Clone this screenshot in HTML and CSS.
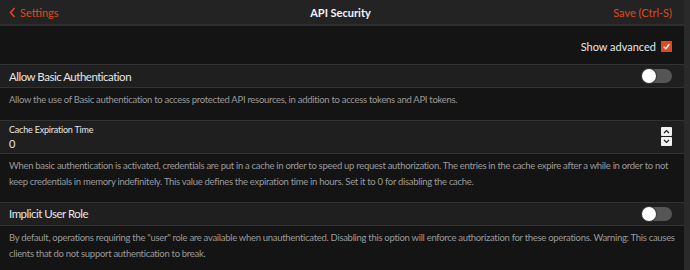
FILE: index.html
```html
<!DOCTYPE html>
<html lang="en">
<head>
  <meta charset="UTF-8" />
  <title>API Security</title>
  <link rel="stylesheet" href="styles.css">
</head>
<body>

<header class="topbar">
  <a class="topbar__back" href="#">
    <svg width="7" height="11" viewBox="0 0 7 11"><path d="M5.5 1 1.5 5.5 5.5 10" fill="none" stroke="currentColor" stroke-width="1.6"/></svg>
    Settings
  </a>
  <div class="topbar__title">API Security</div>
  <a class="topbar__save" href="#">Save (Ctrl-S)</a>
</header>

<main class="settings">
  <div class="settings__advanced">
    <label>Show advanced <span class="checkbox"><svg width="9" height="9" viewBox="0 0 9 9"><path d="M1.8 4.8 3.8 6.7 7.3 2.2" fill="none" stroke="white" stroke-width="1.4"/></svg></span></label>
  </div>

  <section class="option">
    <div class="option__head">
      <span class="option__name">Allow Basic Authentication</span>
      <span class="toggle"></span>
    </div>
    <p class="option__help">Allow the use of Basic authentication to access protected API resources, in addition to access tokens and API tokens.</p>
  </section>

  <section class="option">
    <div class="option__field">
      <div>
        <div class="option__label">Cache Expiration Time</div>
        <div class="option__value">0</div>
      </div>
      <span class="spinner">
        <span class="spinner__btn"><svg width="7" height="5" viewBox="0 0 7 5"><path d="M1 4 3.5 1.5 6 4" fill="none" stroke="#222" stroke-width="1.2"/></svg></span>
        <span class="spinner__btn"><svg width="7" height="5" viewBox="0 0 7 5"><path d="M1 1 3.5 3.5 6 1" fill="none" stroke="#222" stroke-width="1.2"/></svg></span>
      </span>
    </div>
    <p class="option__help">When basic authentication is activated, credentials are put in a cache in order to speed up request authorization. The entries in the cache expire after a while in order to not keep credentials in memory indefinitely. This value defines the expiration time in hours. Set it to 0 for disabling the cache.</p>
  </section>

  <section class="option">
    <div class="option__head">
      <span class="option__name">Implicit User Role</span>
      <span class="toggle"></span>
    </div>
    <p class="option__help">By default, operations requiring the "user" role are available when unauthenticated. Disabling this option will enforce authorization for these operations. Warning: This causes clients that do not support authentication to break.</p>
  </section>
</main>

</body>
</html>
```

FILE: styles.css
```css
* {
  box-sizing: border-box;
}
body {
  margin: 0;
  background: #141414;
  color: #e6e6e6;
  font-family: Lato, 'Noto Sans', sans-serif;
  border-right: 6px solid #2a2a2a;
  min-height: 270px;
}

.topbar {
  display: flex;
  align-items: center;
  justify-content: space-between;
  height: 26px;
  padding: 0 12px 0 9px;
  background: #232323;
  border-bottom: 2px solid #2e2e2e;
  font-size: 11px;
}
.topbar__back,
.topbar__save {
  color: #e0481e;
  text-decoration: none;
  display: flex;
  align-items: center;
  gap: 4px;
  width: 120px;
}
.topbar__save {
  justify-content: flex-end;
}
.topbar__title {
  color: #f4f4f4;
  font-weight: bold;
}

.settings__advanced {
  display: flex;
  justify-content: flex-end;
  height: 38px;
  padding: 14px 12px 0 0;
  font-size: 11px;
}
.settings__advanced label {
  display: flex;
  gap: 5px;
  height: 12px;
  align-items: center;
}
.checkbox {
  display: flex;
  align-items: center;
  justify-content: center;
  width: 11px;
  height: 11px;
  background: #e0481e;
}

.option {
  border-top: 1px solid #333;
}
.option__head {
  display: flex;
  align-items: center;
  justify-content: space-between;
  height: 23px;
  padding: 0 12px 0 9px;
  background: #1f1f1f;
  border-bottom: 1px solid #333;
  font-size: 11.5px;
  letter-spacing: -0.5px;
}
.option__field {
  display: flex;
  align-items: center;
  justify-content: space-between;
  height: 33px;
  padding: 0 12px 0 9px;
  background: #1f1f1f;
  border-bottom: 1px solid #333;
}
.option__label {
  font-size: 9px;
  line-height: 13px;
  letter-spacing: -0.2px;
}
.option__value {
  font-size: 11px;
  line-height: 15px;
}
.option__help {
  margin: 0;
  padding: 4px 4px 11px 9px;
  font-size: 9.5px;
  line-height: 16.5px;
  letter-spacing: -0.3px;
  color: #9a9a9a;
}

.toggle {
  position: relative;
  width: 30px;
  height: 14px;
  border-radius: 7px;
  background: #555;
}
.toggle::before {
  content: "";
  position: absolute;
  left: 0;
  top: 0;
  width: 14px;
  height: 14px;
  border-radius: 50%;
  background: #fff;
  box-shadow: 0 0 0 1px #3a3a3a;
}

.spinner {
  display: flex;
  flex-direction: column;
  gap: 1px;
}
.spinner__btn {
  display: flex;
  align-items: center;
  justify-content: center;
  width: 11px;
  height: 9px;
  background: #f2f2f2;
  border-radius: 1px;
}
```
